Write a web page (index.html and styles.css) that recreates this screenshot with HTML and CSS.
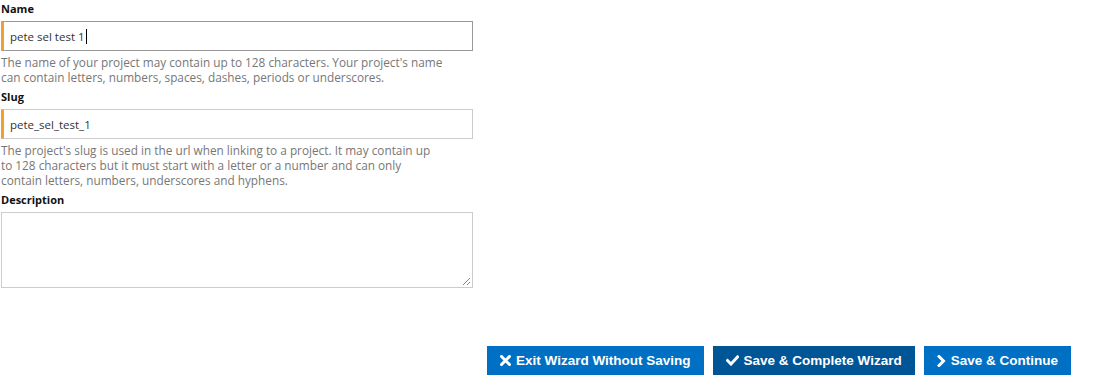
FILE: index.html
```html
<!DOCTYPE html>
<html>
<head>
<meta charset="utf-8">
<link rel="stylesheet" href="styles.css">
</head>
<body>
<div class="page">
  <form class="form">
    <div class="field">
      <label class="label">Name</label>
      <div class="input focused">pete sel test 1<span class="caret"></span></div>
      <p class="help">The name of your project may contain up to 128 characters. Your project's name can contain letters, numbers, spaces, dashes, periods or underscores.</p>
    </div>
    <div class="field">
      <label class="label">Slug</label>
      <div class="input">pete_sel_test_1</div>
      <p class="help">The project's slug is used in the url when linking to a project. It may contain up to 128 characters but it must start with a letter or a number and can only contain letters, numbers, underscores and hyphens.</p>
    </div>
    <div class="field">
      <label class="label">Description</label>
      <div class="textarea">
        <svg class="grip" width="9" height="9" viewBox="0 0 9 9"><path d="M8 1 L1 8 M8 5 L5 8" stroke="#888" stroke-width="1" fill="none"/></svg>
      </div>
    </div>
  </form>
  <div class="actions">
    <button class="btn">
      <svg class="ico" width="11" height="11" viewBox="0 0 11 11"><path d="M1.5 1.5 L9.5 9.5 M9.5 1.5 L1.5 9.5" stroke="#fff" stroke-width="3" stroke-linecap="square"/></svg>
      Exit Wizard Without Saving
    </button>
    <button class="btn dark">
      <svg class="ico" width="13" height="11" viewBox="0 0 13 11"><path d="M1.5 5.5 L5 9 L11.5 2" stroke="#fff" stroke-width="3" fill="none" stroke-linecap="square"/></svg>
      Save &amp; Complete Wizard
    </button>
    <button class="btn">
      <svg class="ico" width="9" height="12" viewBox="0 0 9 12"><path d="M2 1.5 L6.5 6 L2 10.5" stroke="#fff" stroke-width="3" fill="none" stroke-linecap="square"/></svg>
      Save &amp; Continue
    </button>
  </div>
</div>
</body>
</html>
```

FILE: styles.css
```css
html, body {
  margin: 0;
  padding: 0;
  background: #fff;
}
.page {
  padding: 2px 32px 0 1px;
}
.form {
  width: 472px;
  display: flex;
  flex-direction: column;
}
.field {
  display: flex;
  flex-direction: column;
}
.label {
  font-family: "Open Sans", sans-serif;
  font-weight: 700;
  font-size: 11px;
  line-height: 14px;
  color: #111;
  margin-bottom: 5px;
}
.input {
  box-sizing: border-box;
  height: 30px;
  border: 1px solid #ccc;
  border-left: 3px solid #f0a030;
  padding: 0 0 0 6px;
  display: flex;
  align-items: center;
  font-family: "Open Sans", sans-serif;
  font-size: 11.5px;
  color: #333;
}
.input.focused {
  border-color: #999;
  border-left-color: #f0a030;
}
.caret {
  display: inline-block;
  width: 1px;
  height: 15px;
  background: #000;
  margin-left: 1px;
}
.help {
  margin: 4px 0 5px 0;
  width: 443px;
  font-family: "Open Sans", sans-serif;
  font-size: 11.8px;
  line-height: 15px;
  color: #777;
}
.textarea {
  box-sizing: border-box;
  height: 76px;
  border: 1px solid #ccc;
  position: relative;
}
.grip {
  position: absolute;
  right: 1px;
  bottom: 1px;
}
.actions {
  display: flex;
  justify-content: flex-end;
  gap: 9px;
  margin-top: 58px;
}
.btn {
  height: 29px;
  border: none;
  background: #0070c4;
  color: #fff;
  font-family: "Liberation Sans", Arial, sans-serif;
  font-weight: 700;
  font-size: 13.5px;
  padding: 0 13px;
  display: flex;
  align-items: center;
  gap: 5px;
  cursor: pointer;
}
.btn.dark {
  background: #005596;
}
.ico {
  display: block;
}
```
